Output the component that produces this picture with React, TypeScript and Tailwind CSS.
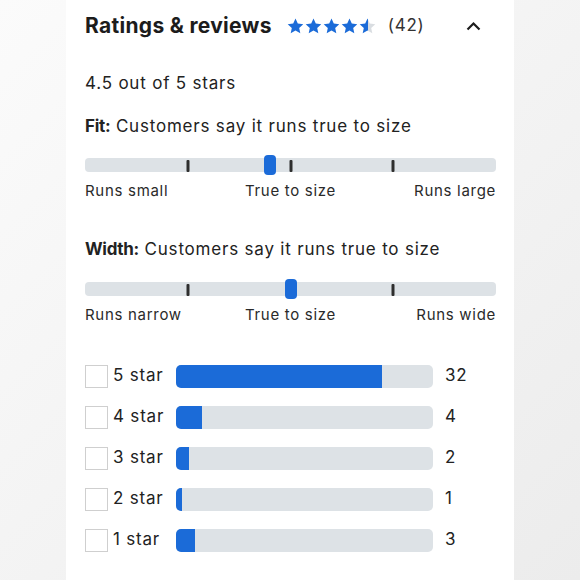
import React from "react";

const font = { fontFamily: "Inter, 'Liberation Sans', sans-serif" };

const Star = ({ fill }: { fill: number }) => {
  const id = `half-${fill}`;
  return (
    <svg width="17" height="16" viewBox="0 0 24 23">
      <defs>
        <linearGradient id={id}>
          <stop offset={`${fill * 100}%`} stopColor="#1b6bd8" />
          <stop offset={`${fill * 100}%`} stopColor="#d9dde1" />
        </linearGradient>
      </defs>
      <path
        d="M12 0.8l3.3 7.2 7.9 0.9-5.9 5.3 1.6 7.8L12 18.1 5.1 22l1.6-7.8L0.8 8.9l7.9-0.9z"
        fill={`url(#${id})`}
      />
    </svg>
  );
};

const Slider = ({ pos, left, right }: { pos: number; left: string; right: string }) => (
  <div>
    <div className="relative h-[14px] rounded-[4px] bg-[#dde2e6]">
      {[25, 50, 75].map((t) => (
        <div
          key={t}
          className="absolute top-[2px] h-[12px] w-[3px] -translate-x-1/2 rounded-[1px] bg-[#2e2e2e]"
          style={{ left: `${t}%` }}
        />
      ))}
      <div
        className="absolute top-[-3px] h-[20px] w-[12px] -translate-x-1/2 rounded-[4px] bg-[#1b6bd8]"
        style={{ left: `${pos}%` }}
      />
    </div>
    <div className="mt-[8px] grid grid-cols-3 text-[15px] tracking-[0.7px] text-[#2a2a2a]">
      <span>{left}</span>
      <span className="text-center">True to size</span>
      <span className="text-right">{right}</span>
    </div>
  </div>
);

const rows = [
  { label: "5 star", count: 32, fill: 206 },
  { label: "4 star", count: 4, fill: 26 },
  { label: "3 star", count: 2, fill: 13 },
  { label: "2 star", count: 1, fill: 6 },
  { label: "1 star", count: 3, fill: 19 },
];

export default function App() {
  return (
    <div
      className="flex h-[580px] justify-center overflow-hidden bg-gradient-to-br from-[#fbfbfb] to-[#ececec]"
      style={font}
    >
      <div className="w-[448px] bg-white pl-[19px] pr-[18px] pt-[12px] text-[#1c1c1c]">
        <div className="flex h-[27px] items-center">
          <h2 className="text-[21px] font-bold tracking-[0.3px]">Ratings &amp; reviews</h2>
          <div className="ml-[15px] flex gap-[1px]">
            {[1, 1, 1, 1, 0.5].map((f, i) => (
              <Star key={i} fill={f} />
            ))}
          </div>
          <span className="ml-[12px] text-[17px] tracking-[0.7px] text-[#333]">(42)</span>
          <svg className="ml-auto mr-[15px]" width="15" height="10" viewBox="0 0 15 10">
            <path d="M1.5 8.5L7.5 2.5 13.5 8.5" fill="none" stroke="#1c1c1c" strokeWidth="2.2" />
          </svg>
        </div>

        <div className="tracking-[0.8px]">
          <p className="mt-[32px] text-[17px] text-[#222]">4.5 out of 5 stars</p>

          <p className="mt-[17px] text-[17px] text-[#222]">
            <span className="font-bold tracking-[-0.3px]">Fit:</span> Customers say it runs true to size
          </p>
          <div className="mt-[19px]">
            <Slider pos={45} left="Runs small" right="Runs large" />
          </div>

          <p className="mt-[34px] text-[17px] text-[#222]">
            <span className="font-bold tracking-[-0.3px]">Width:</span> Customers say it runs true to size
          </p>
          <div className="mt-[20px]">
            <Slider pos={50} left="Runs narrow" right="Runs wide" />
          </div>

          <div className="mt-[38px] flex flex-col gap-[18px]">
            {rows.map((r) => (
              <div key={r.label} className="flex h-[23px] items-center">
                <div className="h-[23px] w-[23px] border-[1.5px] border-[#cfcfcf] bg-white" />
                <span className="ml-[5px] w-[63px] text-[17px] text-[#222]">{r.label}</span>
                <div className="h-[23px] w-[257px] overflow-hidden rounded-[5px] bg-[#dde2e6]">
                  <div className="h-full bg-[#1b6bd8]" style={{ width: r.fill }} />
                </div>
                <span className="ml-[12px] text-[17px] text-[#222]">{r.count}</span>
              </div>
            ))}
          </div>
        </div>
      </div>
    </div>
  );
}
